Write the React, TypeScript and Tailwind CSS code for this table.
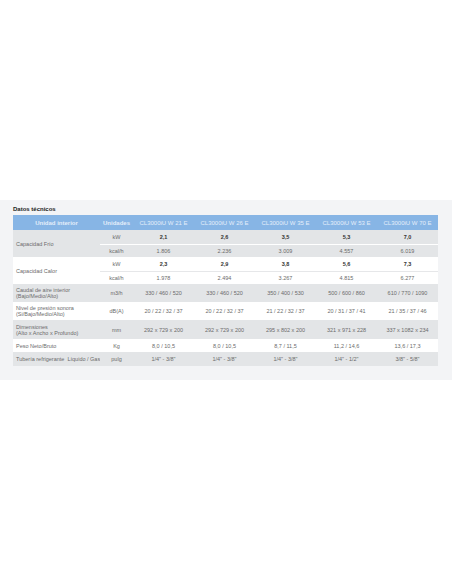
import React from "react";

const models = ["CL3000iU W 21 E", "CL3000iU W 26 E", "CL3000iU W 35 E", "CL3000iU W 53 E", "CL3000iU W 70 E"];

type Row = { label: React.ReactNode; unit: string; vals: string[]; bg: string; h: string };

const rows: Row[] = [
  { label: <>Caudal de aire interior<br />(Bajo/Medio/Alto)</>, unit: "m3/h", vals: ["330 / 460 / 520", "330 / 460 / 520", "350 / 400 / 530", "500 / 600 / 860", "610 / 770 / 1090"], bg: "bg-[#e3e5e7]", h: "h-[18px]" },
  { label: <>Nivel de presión sonora<br />(Si/Bajo/Medio/Alto)</>, unit: "dB(A)", vals: ["20 / 22 / 32 / 37", "20 / 22 / 32 / 37", "21 / 22 / 32 / 37", "20 / 31 / 37 / 41", "21 / 35 / 37 / 46"], bg: "bg-white", h: "h-[18px]" },
  { label: <>Dimensiones<br />(Alto x Ancho x Profundo)</>, unit: "mm", vals: ["292 x 729 x 200", "292 x 729 x 200", "295 x 802 x 200", "321 x 971 x 228", "337 x 1082 x 234"], bg: "bg-[#e3e5e7]", h: "h-[19px]" },
  { label: <>Peso Neto/Bruto</>, unit: "Kg", vals: ["8,0 / 10,5", "8,0 / 10,5", "8,7 / 11,5", "11,2 / 14,6", "13,6 / 17,3"], bg: "bg-white", h: "h-[13px]" },
  { label: <>Tubería refrigerante&nbsp;&nbsp;Líquido / Gas</>, unit: "pulg", vals: ["1/4\" - 3/8\"", "1/4\" - 3/8\"", "1/4\" - 3/8\"", "1/4\" - 1/2\"", "3/8\" - 5/8\""], bg: "bg-[#e3e5e7]", h: "h-[14px]" },
];

function Cap({ label, kw, kcal, bg, sep }: { label: string; kw: string[]; kcal: string[]; bg: string; sep: string }) {
  return (
    <>
      <tr className={`${bg} h-[14px]`}>
        <td rowSpan={2} className="pl-[3px] text-left align-middle whitespace-nowrap">{label}</td>
        <td className={`text-center border-b ${sep}`}>kW</td>
        {kw.map((v, i) => (
          <td key={i} className={`text-center font-bold text-[#333] border-b ${sep}`}>{v}</td>
        ))}
      </tr>
      <tr className={`${bg} h-[13px]`}>
        <td className="text-center">kcal/h</td>
        {kcal.map((v, i) => (
          <td key={i} className="text-center">{v}</td>
        ))}
      </tr>
    </>
  );
}

export default function App() {
  return (
    <div className="min-h-[584px] w-[452px] bg-white pt-[200px]" style={{ fontFamily: "'Liberation Sans', Arial, sans-serif" }}>
      <div className="h-[180px] bg-[#f3f4f6] pl-[13px] pr-[14px] pt-[5px]">
        <div className="h-[8px] text-[6px] leading-[8px] font-bold text-[#222] mb-[2px]">Datos técnicos</div>
        <table className="w-[425px] border-collapse table-fixed text-[5.5px] leading-[6px] text-[#6b6b6b]">
          <colgroup>
            <col className="w-[87px]" />
            <col className="w-[33px]" />
            <col className="w-[61px]" />
            <col className="w-[61px]" />
            <col className="w-[61px]" />
            <col className="w-[61px]" />
            <col className="w-[61px]" />
          </colgroup>
          <thead>
            <tr className="bg-[#87b5e5] h-[15px] text-[#e4eefa] text-[6px]">
              <th className="font-bold text-center">Unidad interior</th>
              <th className="font-bold text-center">Unidades</th>
              {models.map((m) => (
                <th key={m} className="font-normal text-center whitespace-nowrap">{m}</th>
              ))}
            </tr>
          </thead>
          <tbody>
            <Cap label="Capacidad Frío" kw={["2,1", "2,6", "3,5", "5,3", "7,0"]} kcal={["1.806", "2.236", "3.009", "4.557", "6.019"]} bg="bg-[#e3e5e7]" sep="border-white" />
            <Cap label="Capacidad Calor" kw={["2,3", "2,9", "3,8", "5,6", "7,3"]} kcal={["1.978", "2.494", "3.267", "4.815", "6.277"]} bg="bg-white" sep="border-[#e6e7e9]" />
            {rows.map((r, i) => (
              <tr key={i} className={`${r.bg} ${r.h}`}>
                <td className="pl-[3px] text-left align-middle whitespace-nowrap overflow-hidden">{r.label}</td>
                <td className="text-center">{r.unit}</td>
                {r.vals.map((v, j) => (
                  <td key={j} className="text-center whitespace-nowrap">{v}</td>
                ))}
              </tr>
            ))}
          </tbody>
        </table>
      </div>
    </div>
  );
}
